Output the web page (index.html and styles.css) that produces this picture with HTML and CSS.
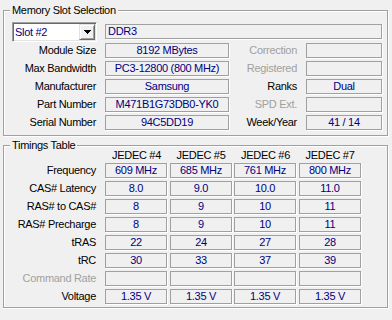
FILE: index.html
```html
<!DOCTYPE html>
<html lang="en">
  <head>
    <meta charset="UTF-8" />
    <title>SPD</title>
    <link rel="stylesheet" href="styles.css">
  </head>
  <body>
    <fieldset class="group slot-group">
      <legend>Memory Slot Selection</legend>
      <div class="slot-grid">
        <div class="select">
          <span class="select-text">Slot #2</span>
          <span class="select-btn">
            <svg width="7" height="4" viewBox="0 0 7 4">
              <path d="M0 0h7v1H0zM1 1h5v1H1zM2 2h3v1H2zM3 3h1v1H3z" fill="#000" />
            </svg>
          </span>
        </div>
        <div class="field wide">DDR3</div>

        <div class="label">Module Size</div>
        <div class="field">8192 MBytes</div>
        <div class="label off">Correction</div>
        <div class="field"></div>

        <div class="label">Max Bandwidth</div>
        <div class="field">PC3-12800 (800 MHz)</div>
        <div class="label off">Registered</div>
        <div class="field"></div>

        <div class="label">Manufacturer</div>
        <div class="field">Samsung</div>
        <div class="label">Ranks</div>
        <div class="field">Dual</div>

        <div class="label">Part Number</div>
        <div class="field">M471B1G73DB0-YK0</div>
        <div class="label off">SPD Ext.</div>
        <div class="field"></div>

        <div class="label">Serial Number</div>
        <div class="field">94C5DD19</div>
        <div class="label">Week/Year</div>
        <div class="field">41 / 14</div>
      </div>
    </fieldset>

    <fieldset class="group timings-group">
      <legend>Timings Table</legend>
      <div class="timings-grid">
        <div class="label"></div>
        <div class="head">JEDEC #4</div>
        <div class="head">JEDEC #5</div>
        <div class="head">JEDEC #6</div>
        <div class="head">JEDEC #7</div>

        <div class="label">Frequency</div>
        <div class="field">609 MHz</div>
        <div class="field">685 MHz</div>
        <div class="field">761 MHz</div>
        <div class="field">800 MHz</div>

        <div class="label">CAS# Latency</div>
        <div class="field">8.0</div>
        <div class="field">9.0</div>
        <div class="field">10.0</div>
        <div class="field">11.0</div>

        <div class="label">RAS# to CAS#</div>
        <div class="field">8</div>
        <div class="field">9</div>
        <div class="field">10</div>
        <div class="field">11</div>

        <div class="label">RAS# Precharge</div>
        <div class="field">8</div>
        <div class="field">9</div>
        <div class="field">10</div>
        <div class="field">11</div>

        <div class="label">tRAS</div>
        <div class="field">22</div>
        <div class="field">24</div>
        <div class="field">27</div>
        <div class="field">28</div>

        <div class="label">tRC</div>
        <div class="field">30</div>
        <div class="field">33</div>
        <div class="field">37</div>
        <div class="field">39</div>

        <div class="label off">Command Rate</div>
        <div class="field"></div>
        <div class="field"></div>
        <div class="field"></div>
        <div class="field"></div>

        <div class="label">Voltage</div>
        <div class="field">1.35 V</div>
        <div class="field">1.35 V</div>
        <div class="field">1.35 V</div>
        <div class="field">1.35 V</div>
      </div>
    </fieldset>
  </body>
</html>
```

FILE: styles.css
```css
body {
  margin: 0;
  width: 392px;
  height: 320px;
  overflow: hidden;
  background: #f0f0f0;
  font-family: "Liberation Sans", Arial, sans-serif;
  font-size: 11px;
  letter-spacing: -0.3px;
  color: #000;
}

/* Windows style etched group box */
.group {
  margin: 0 4px 0 3px;
  padding: 0;
  border: 1px solid #a0a0a0;
  box-shadow: inset 1px 1px 0 #fff, 1px 1px 0 #fff;
  min-width: 0;
}
.group legend {
  margin-left: 6px;
  padding: 0 2px;
  line-height: 13px;
  background: #f0f0f0;
}
.slot-group {
  margin-top: 4px;
}
.timings-group {
  margin-top: 3px;
}

.slot-grid {
  display: grid;
  grid-template-columns: 84px 124px 59px 76px;
  grid-template-rows: 18px repeat(5, 15px);
  column-gap: 9px;
  row-gap: 3px;
  margin: 5px 0 5px 8px;
}
.timings-grid {
  display: grid;
  grid-template-columns: 91px 63px 62px 63px 62px;
  grid-template-rows: repeat(9, 15px);
  column-gap: 2px;
  row-gap: 3px;
  margin: -7px 0 3px 8px;
}

.label {
  text-align: right;
  line-height: 15px;
  white-space: nowrap;
}
.timings-grid .label {
  padding-right: 7px;
}
.label.off {
  color: #a0a0a0;
}
.head {
  text-align: center;
  line-height: 15px;
  padding-top: 3px;
  white-space: nowrap;
}

.field {
  box-sizing: border-box;
  height: 15px;
  width: 100%;
  border: 1px solid #a0a0a0;
  box-shadow: 1px 1px 0 #fff;
  line-height: 13px;
  text-align: center;
  color: #000080;
  white-space: nowrap;
  overflow: hidden;
}
.timings-grid .field {
  width: 62px;
}
.field.wide {
  grid-column: 2 / 5;
  margin-top: 2px;
  padding-left: 2px;
  text-align: left;
}

/* combo box */
.select {
  box-sizing: border-box;
  display: flex;
  width: 85px;
  height: 20px;
  padding: 1px;
  background: #fff;
  border: 1px solid;
  border-color: #a0a0a0 #fff #fff #a0a0a0;
  box-shadow: inset 1px 1px 0 #696969, inset -1px -1px 0 #e3e3e3;
}
.select-text {
  flex: 1;
  padding-left: 1px;
  line-height: 16px;
  color: #000080;
}
.select-btn {
  box-sizing: border-box;
  display: flex;
  align-items: center;
  justify-content: center;
  width: 16px;
  height: 16px;
  background: #f0f0f0;
  border: 1px solid;
  border-color: #e3e3e3 #696969 #696969 #e3e3e3;
  box-shadow: inset 1px 1px 0 #fff, inset -1px -1px 0 #a0a0a0;
}
.select-btn svg {
  display: block;
}
```
